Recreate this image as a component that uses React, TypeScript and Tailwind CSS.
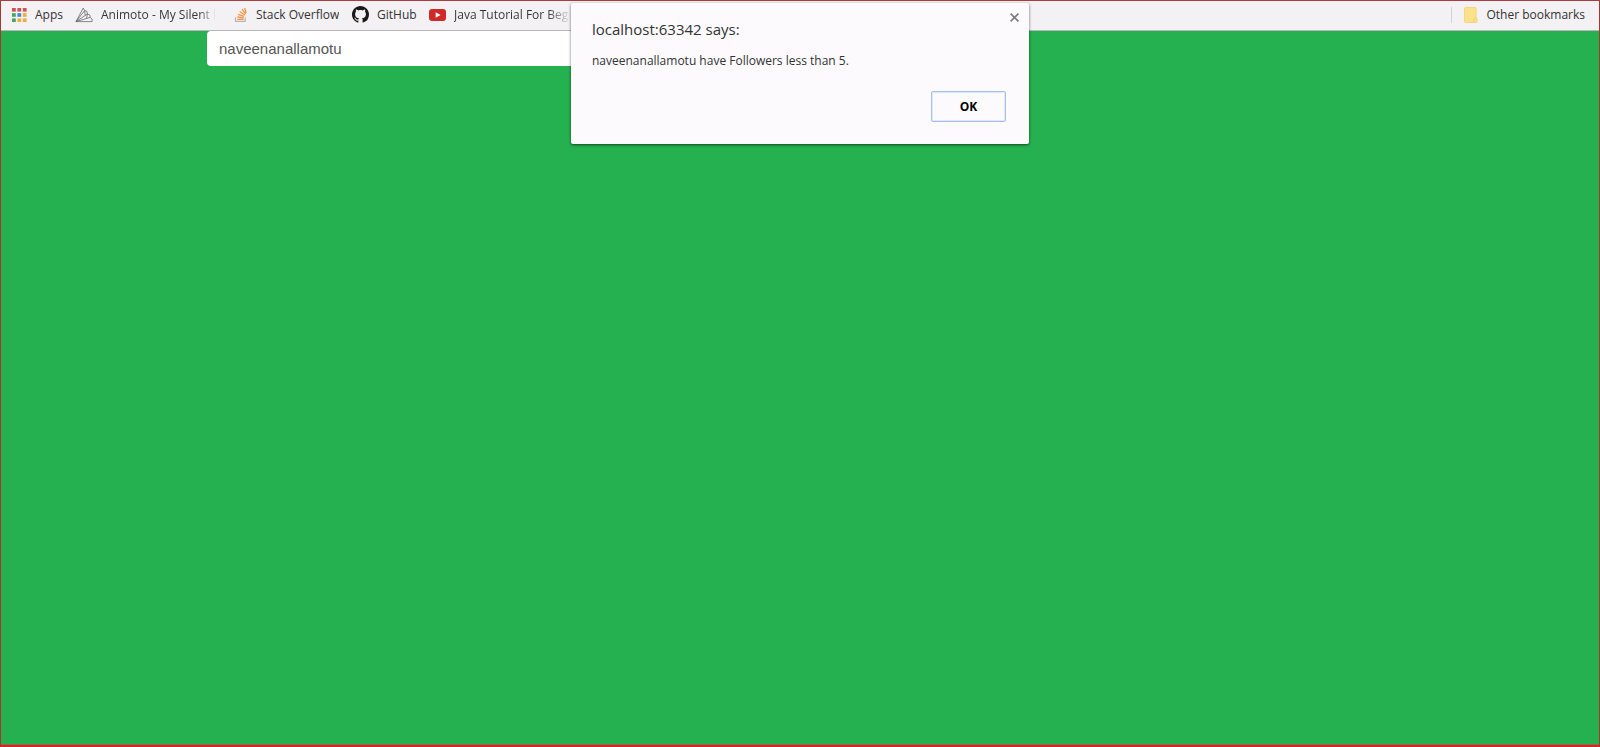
import { useState } from "react";
import type { ReactNode } from "react";

const appColors = ["#d0524c", "#d0524c", "#d0524c", "#4aa564", "#4385d6", "#e8b13c", "#4aa564", "#e8b13c", "#e8b13c"];

function AppsIcon() {
  return (
    <svg className="h-4 w-4 shrink-0" viewBox="0 0 16 16" aria-hidden="true">
      {appColors.map((color, i) => (
        <rect key={i} x={1 + (i % 3) * 5.4} y={1 + Math.floor(i / 3) * 5.2} width="3.8" height="3.6" fill={color} />
      ))}
    </svg>
  );
}

function AnimotoIcon() {
  return (
    <svg className="h-4 w-[18px] shrink-0" viewBox="0 0 18 16" fill="none" stroke="#6b6b6b" strokeWidth="0.8" strokeLinejoin="round" aria-hidden="true">
      <path d="M1 14.6 L8.2 1 L9.6 3.6 L1 14.6" />
      <path d="M9.6 3.6 L11.8 4.2 L12.4 7 L1 14.6" />
      <path d="M12.4 7 L14.8 8 L15.2 10.4 L1 14.6" />
      <path d="M15.2 10.4 L17 12 L17.2 14.6 L1 14.6" />
      <path d="M9.6 3.6 L10.2 8.4 M12.4 7 L11.6 11.4" />
    </svg>
  );
}

function StackOverflowIcon() {
  return (
    <svg className="h-4 w-4 shrink-0" viewBox="0 0 16 16" fill="none" aria-hidden="true">
      <path d="M1.5 10.2 V14.3 H11.2 V10.2" stroke="#bcb4ae" strokeWidth="1.2" />
      <path d="M3.2 12.4 H9.6 M3.3 10 L9.7 10.9 M4 7.4 L10.1 9.3 M5.6 4.5 L10.9 8 M8 2.2 L11.6 6.9 M10.7 1 L12.1 6" stroke="#f0954a" strokeWidth="1.3" />
    </svg>
  );
}

function GitHubIcon() {
  return (
    <svg className="h-[17px] w-[17px] shrink-0" viewBox="0 0 16 16" fill="#1b1817" aria-hidden="true">
      <path d="M8 0C3.58 0 0 3.58 0 8c0 3.54 2.29 6.53 5.47 7.59.4.07.55-.17.55-.38 0-.19-.01-.82-.01-1.49-2.01.37-2.53-.49-2.69-.94-.09-.23-.48-.94-.82-1.13-.28-.15-.68-.52-.01-.53.63-.01 1.08.58 1.23.82.72 1.21 1.87.87 2.33.66.07-.52.28-.87.51-1.07-1.78-.2-3.64-.89-3.64-3.95 0-.87.31-1.59.82-2.15-.08-.2-.36-1.02.08-2.12 0 0 .67-.21 2.2.82.64-.18 1.32-.27 2-.27s1.36.09 2 .27c1.53-1.04 2.2-.82 2.2-.82.44 1.1.16 1.92.08 2.12.51.56.82 1.27.82 2.15 0 3.07-1.87 3.75-3.65 3.95.29.25.54.73.54 1.48 0 1.07-.01 1.93-.01 2.2 0 .21.15.46.55.38A8.01 8.01 0 0 0 16 8c0-4.42-3.58-8-8-8Z" />
    </svg>
  );
}

function YouTubeIcon() {
  return (
    <svg className="h-3 w-[17px] shrink-0" viewBox="0 0 17 12" aria-hidden="true">
      <rect width="17" height="12" rx="3" fill="#cf2a27" />
      <path d="M6.7 3.3 L11.6 6 L6.7 8.7 Z" fill="#fff" />
    </svg>
  );
}

function FolderIcon() {
  return (
    <svg className="h-4 w-[14px] shrink-0" viewBox="0 0 14 16" aria-hidden="true">
      <path d="M1.5 .5 H11 Q12 .5 12 1.5 V11 L13.2 12 V14.5 Q13.2 15.5 12.2 15.5 H1.5 Q.5 15.5 .5 14.5 V1.5 Q.5 .5 1.5 .5 Z" fill="#fbe28a" stroke="#f0d67e" />
      <path d="M10 15.5 V12.5 Q10 11.5 12 11" fill="none" stroke="#edcf6c" />
    </svg>
  );
}

function Bookmark({ icon, children, className = "" }: { icon: ReactNode; children: ReactNode; className?: string }) {
  return (
    <a href="#" className={`flex shrink-0 items-center ${className}`}>
      {icon}
      <span className="overflow-hidden whitespace-nowrap">{children}</span>
    </a>
  );
}

export default function App() {
  const [open, setOpen] = useState(true);
  return (
    <div className="relative flex min-h-screen flex-col border border-b-2 border-[#a33a30] border-t-[#b03a42] border-b-[#d3262a] bg-[#25b14f] font-['Open_Sans','Noto_Sans',sans-serif]">
      <nav aria-label="Bookmarks" className="flex h-[30px] items-center border-b border-[#b9b6ba] bg-[#f3f1f3] pr-3.5 pb-0.5 pl-2.5 text-xs text-[#333]">
        <Bookmark icon={<AppsIcon />} className="w-16 gap-2">Apps</Bookmark>
        <Bookmark icon={<AnimotoIcon />} className="w-[143px] gap-2">
          <span className="bg-linear-to-r from-[#333] from-85% to-transparent bg-clip-text text-transparent">Animoto - My Silent l</span>
        </Bookmark>
        <Bookmark icon={<StackOverflowIcon />} className="ml-4 w-[118px] gap-1.5">Stack Overflow</Bookmark>
        <Bookmark icon={<GitHubIcon />} className="w-[77px] gap-2">GitHub</Bookmark>
        <Bookmark icon={<YouTubeIcon />} className="w-[145px] gap-2">
          <span className="bg-linear-to-r from-[#333] from-80% to-transparent bg-clip-text text-transparent">Java Tutorial For Begi</span>
        </Bookmark>
        <div className="ml-auto flex items-center gap-3">
          <span className="h-4 w-px bg-[#d3d1d3]" />
          <Bookmark icon={<FolderIcon />} className="gap-2">Other bookmarks</Bookmark>
        </div>
      </nav>
      <main className="grow pl-[206px]">
        <input
          aria-label="Username"
          defaultValue="naveenanallamotu"
          className="block h-[35px] w-1/2 rounded-sm bg-white px-3 font-['Liberation_Sans',sans-serif] text-[15px] text-[#555] outline-none"
        />
      </main>
      <div className="h-px bg-[#8c6b45]" />
      {open && (
        <div
          role="alertdialog"
          aria-labelledby="alert-title"
          aria-describedby="alert-message"
          className="absolute top-0.5 left-1/2 flex w-[458px] -translate-x-1/2 flex-col rounded-xs bg-[#fcfafd] pt-4 pr-[23px] pb-[22px] pl-[21px] text-[#333] shadow-[0_1px_3px_rgba(0,0,0,0.6)]"
        >
          <button aria-label="Close" onClick={() => setOpen(false)} className="absolute top-2.5 right-2.5">
            <svg className="h-[9px] w-[9px]" viewBox="0 0 9 9" stroke="#7d7d7d" strokeWidth="1.6" aria-hidden="true">
              <path d="M.6 .6 L8.4 8.4 M8.4 .6 L.6 8.4" />
            </svg>
          </button>
          <h1 id="alert-title" className="text-[15px] leading-5">localhost:63342 says:</h1>
          <p id="alert-message" className="mt-3.5 text-xs leading-4">naveenanallamotu have Followers less than 5.</p>
          <button onClick={() => setOpen(false)} className="mt-[22px] h-[31px] w-[75px] self-end rounded-xs border border-[#a3bff0] text-xs font-bold text-black ring-1 ring-[#dfe8fa] ring-inset">
            OK
          </button>
        </div>
      )}
    </div>
  );
}
